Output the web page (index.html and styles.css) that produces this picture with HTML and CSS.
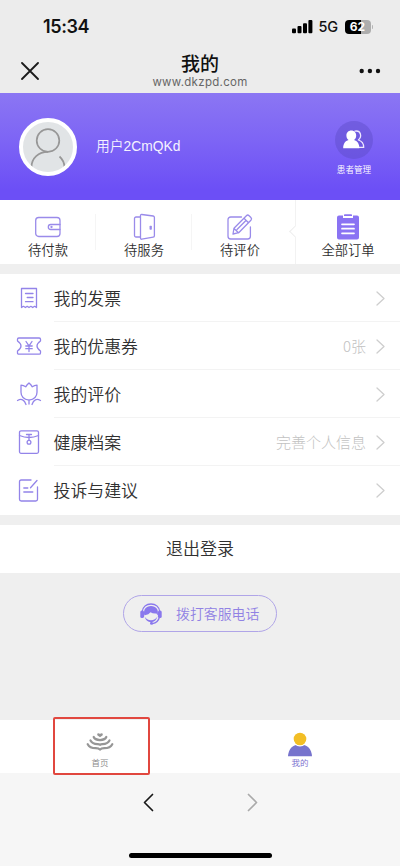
FILE: index.html
```html
<!DOCTYPE html>
<html lang="zh-CN">
<head>
<meta charset="utf-8">
<meta name="viewport" content="width=device-width, initial-scale=1">
<title>我的</title>
<link rel="stylesheet" href="styles.css">
</head>
<body>
<header class="top">
  <div class="status">
    <span class="time">15:34</span>
    <span class="status-right">
      <svg width="21" height="14" viewBox="0 0 21 14"><rect x="0" y="8.5" width="4" height="4.7" rx="1"/><rect x="5.5" y="6" width="4" height="7.2" rx="1"/><rect x="11" y="3.2" width="4" height="10" rx="1"/><rect x="16.4" y="0" width="4" height="13.2" rx="1"/></svg>
      <span class="net">5G</span>
      <span class="battery"><span class="level">62</span></span>
      <span class="battery-tip"></span>
    </span>
  </div>
  <div class="nav">
    <svg class="close" width="18" height="18" viewBox="0 0 18 18"><path d="M1 1L17 17M17 1L1 17"/></svg>
    <div class="heading"><h1>我的</h1><p>www.dkzpd.com</p></div>
    <svg class="more" width="22" height="6" viewBox="0 0 22 6"><circle cx="2.700" cy="3" r="2.200"/><circle cx="10.900" cy="3" r="2.200"/><circle cx="19" cy="3" r="2.200"/></svg>
  </div>
</header>

<section class="profile">
  <div class="avatar"><svg width="50" height="50" viewBox="0 0 50 50"><circle cx="25" cy="18.500" r="11.300"/><path d="M8.500 45c0-9 7-15.200 16.500-15.200M36.500 34.500c3.300 3 4.800 6.400 5 10.500"/></svg></div>
  <span class="user">用户2CmQKd</span>
  <a class="patients">
    <span class="disc"><svg width="24" height="22" viewBox="0 0 24 22"><path class="back" d="M13 2.200c5.500-1.200 7.500 5.300 3.400 8.800 4 1.200 5.300 3.600 5.300 7.400H17"/><path class="front" d="M9.300 1.500c3 0 4.900 2.200 4.900 5 0 1.900-.9 3.700-2.200 4.600 3.500 1 5.400 3.800 5.400 8.100H1.200c0-4.300 2-7.100 5.400-8.100C5.300 10.200 4.400 8.400 4.400 6.500c0-2.800 1.900-5 4.900-5z"/></svg></span>
    <span>患者管理</span>
  </a>
</section>

<nav class="orders">
  <a><svg width="28" height="28" viewBox="0 0 28 28"><rect x="1.700" y="4.500" width="24.300" height="19" rx="3"/><path d="M26 11.500H16.800a2.500 2.500 0 0 0 0 5H26"/><circle cx="17.500" cy="14" r=".5"/></svg><span>待付款</span></a>
  <a><svg width="28" height="28" viewBox="0 0 28 28"><path d="M10.300 24H6a1.500 1.500 0 0 1-1.500-1.500v-17A1.500 1.500 0 0 1 6 4h4.300M10.500 2.500v22.600q0 1.300 1.300 1.100l11.400-2q1.200-.2 1.200-1.400V4.400q0-1.200-1.200-1.400L11.800 1.500q-1.300-.2-1.300 1z"/><rect x="20.200" y="13.500" width="1" height="2.600"/></svg><span>待服务</span></a>
  <a><svg width="28" height="28" viewBox="0 0 28 28"><path d="M15.500 4H4.700A2.700 2.700 0 0 0 2 6.700v16.600A2.700 2.700 0 0 0 4.700 26h17a2.700 2.700 0 0 0 2.700-2.700V14M7 21l1-5.800L20.400 2.700q1.300-1.300 2.700 0l1.800 1.800q1.300 1.300 0 2.700L12.700 19.700zM18 5.200l4.500 4.500M8 15.500l4.500 4.200M11 16.500l8.700-8.700"/></svg><span>待评价</span></a>
  <a class="all"><svg class="solid" width="28" height="28" viewBox="0 0 28 28"><path d="M5 2.500h4V5h10V2.500h4q2 0 2 2v20q0 2-2 2H5q-2 0-2-2v-20q0-2 2-2z"/><path d="M10 3V2q0-.8.800-.8h6.400q.8 0 .8.800v1z"/><path class="lines" d="M8 11.300h12M8 15.700h12M8 20.300h12"/></svg><span>全部订单</span><i class="notch"></i></a>
</nav>

<main class="menu">
  <a class="row"><svg class="ico" width="26" height="26" viewBox="0 0 26 26"><path d="M5.500 22.500V3.500h15v19M5.500 22.500l2-1.200 1.900 1.200 1.800-1.200 1.800 1.200 1.900-1.200 1.800 1.200 1.900-1.200 1.900 1.200M9.500 8.500h7.500M11.200 12.500H17M9.500 16.700h7.500"/></svg><span class="body">我的发票<span class="note"></span><svg class="arrow" width="9" height="15" viewBox="0 0 9 15"><path d="M1 1l7 6.500L1 14"/></svg></span></a>
  <a class="row"><svg class="ico" width="26" height="26" viewBox="0 0 26 26"><path d="M2.800 5h20.400q1.300 0 1.300 1.300v1.700q-7 5 0 10v1.900q0 1.300-1.300 1.300H2.800q-1.300 0-1.300-1.300V18q7-5 0-10V6.300Q1.500 5 2.800 5zM10 8.500l3 4.300 3-4.300M9.800 13h6.400M9.800 15.700h6.400M13 13v5.500"/></svg><span class="body">我的优惠券<span class="note">0张</span><svg class="arrow" width="9" height="15" viewBox="0 0 9 15"><path d="M1 1l7 6.500L1 14"/></svg></span></a>
  <a class="row"><svg class="ico" width="26" height="26" viewBox="0 0 26 26"><path d="M13 2q2 1.700 3.300 3.800Q18.500 4.500 21 4.200v7q0 6.500-8 8-8-1.500-8-8v-7q2.500.3 4.700 1.600Q11 3.700 13 2zM13 19v4M1.500 19.500q6-3.300 8.500 4M24.500 19.500q-6-3.300-8.500 4"/></svg><span class="body">我的评价<span class="note"></span><svg class="arrow" width="9" height="15" viewBox="0 0 9 15"><path d="M1 1l7 6.500L1 14"/></svg></span></a>
  <a class="row"><svg class="ico" width="26" height="26" viewBox="0 0 26 26"><rect x="3.500" y="1.800" width="19" height="22.500" rx="1.500"/><path d="M3.500 6.500q9.500 4 19 0M10.500 5.500h5M13 5.500v5.800"/><circle cx="13" cy="13.200" r="1.900"/></svg><span class="body">健康档案<span class="note">完善个人信息</span><svg class="arrow" width="9" height="15" viewBox="0 0 9 15"><path d="M1 1l7 6.500L1 14"/></svg></span></a>
  <a class="row"><svg class="ico" width="26" height="26" viewBox="0 0 26 26"><path d="M15 3H5.200Q3.500 3 3.500 4.700v17.600q0 1.700 1.700 1.700h14.600q1.700 0 1.700-1.700V10M21 3.500l-6.500 7.200M7.800 11h4M7.800 15h9"/></svg><span class="body">投诉与建议<span class="note"></span><svg class="arrow" width="9" height="15" viewBox="0 0 9 15"><path d="M1 1l7 6.500L1 14"/></svg></span></a>
</main>

<a class="logout">退出登录</a>

<div class="service">
  <a class="call"><svg width="22" height="22" viewBox="0 0 22 22"><path class="fill" d="M4.300 12.500C3 6.500 6 3 11 3s8 3.500 6.700 9.500q-.5-.4-1.200-2-3.800.3-6-1.200-2 2.400-4.800 2.700z"/><rect class="fill" x=".3" y="7.500" width="3.700" height="7.500" rx="1.600"/><rect class="fill" x="18" y="7.500" width="3.700" height="7.500" rx="1.600"/><path class="stroke" d="M2.300 8.500C2.800 4 6.300 1 11 1s8.200 3 8.700 7.500M19.500 14q-1.500 5.800-7 6.700"/><path class="fill" d="M4.300 13q2 6.200 6.700 6.200 4.700 0 6.700-6.200-2.500 4.300-6.700 4.300T4.300 13z"/><circle class="fill" cx="11.500" cy="20.300" r="1.500"/></svg><span>拨打客服电话</span></a>
</div>

<nav class="tabbar">
  <a class="home"><svg width="28" height="22" viewBox="0 0 28 22"><path class="heart" d="M14 6.200l-2.700-2q-.7-1.900 1-2 1.200 0 1.700.9.500-.9 1.700-.9 1.700.1 1 2z"/><path d="M7.700 6q1 2.700 6.300 3.100 5.300-.4 6.300-3.100M4.500 9.500q1.800 3.500 7 3.600 1.800 0 2.500.8.700-.8 2.500-.8 5.200-.1 7-3.600M1.700 13.200q2 3.900 8 4 3.200 0 4.300 1.400 1.100-1.400 4.300-1.400 6-.1 8-4"/></svg><span>首页</span></a>
  <a class="mine"><svg width="26" height="26" viewBox="0 0 26 26"><path fill="#7673cd" d="M1 25.300q.8-11.500 12-11.800 11.200.3 12 11.800z"/><circle cx="13" cy="8" r="7.400" fill="#fff"/><circle cx="13" cy="8" r="6.300" fill="#f2be25"/></svg><span>我的</span></a>
  <i class="highlight"></i>
</nav>

<footer class="browser">
  <div class="history">
    <svg width="11" height="19" viewBox="0 0 11 19"><path d="M9.500 1.500L1.500 9.500l8 8"/></svg>
    <svg class="off" width="11" height="19" viewBox="0 0 11 19"><path d="M1.500 1.500l8 8-8 8"/></svg>
  </div>
  <div class="indicator"></div>
</footer>
</body>
</html>
```
FILE: styles.css
```css
* { box-sizing: border-box; }
body {
  margin: 0;
  width: 400px;
  height: 866px;
  display: flex;
  flex-direction: column;
  overflow: hidden;
  background: #efefef;
  color: #303030;
  font-family: "Liberation Sans", "Noto Sans CJK SC", sans-serif;
  font-weight: 350;
}
svg { display: block; flex: none; fill: none; stroke-linecap: round; stroke-linejoin: round; }
h1, p { margin: 0; }

.top { height: 93px; background: #ececec; color: #111; }
.status {
  height: 50px;
  padding: 3px 27px 0 43px;
  display: flex;
  align-items: center;
  justify-content: space-between;
  font-family: Inter, sans-serif;
}
.time { font-size: 18px; font-weight: 600; letter-spacing: -.4px; }
.status-right { display: flex; align-items: center; }
.status-right svg { fill: #000; }
.net { margin-left: 6px; width: 26px; font-size: 14.500px; font-weight: 500; letter-spacing: -.2px; }
.battery {
  width: 26px;
  height: 14px;
  border-radius: 4px;
  background: linear-gradient(90deg, #000 62%, #adadad 62%);
  color: #fff;
  text-align: center;
  line-height: 14px;
}
.level { display: block; font-size: 12px; font-weight: 700; }
.battery-tip { width: 1.500px; height: 4px; margin-left: 1px; border-radius: 0 2px 2px 0; background: #b5b5b5; }
.nav { display: flex; justify-content: space-between; height: 43px; padding: 0 19px 0 21px; }
.close { margin-top: 12px; stroke: #1a1a1a; stroke-width: 1.800; }
.more { margin-top: 18px; fill: #111; }
.heading { text-align: center; padding-left: 2px; }
h1 { font-family: "Noto Sans CJK SC", sans-serif; font-size: 19px; font-weight: 500; line-height: 26px; }
.heading p { font-family: Inter, sans-serif; font-weight: 400; font-size: 11.500px; letter-spacing: .3px; line-height: 13px; color: #666; }

.profile {
  height: 107px;
  padding: 0 27px 0 19px;
  display: flex;
  align-items: center;
  background: linear-gradient(#8b76f3, #7d64f5 45%, #6c4ff6 90%);
  color: #fff;
}
.avatar {
  width: 58px;
  height: 58px;
  border: 4px solid #fff;
  border-radius: 50%;
  background: #e1e4e6;
  overflow: hidden;
}
.avatar svg { stroke: #979797; stroke-width: 1.700; stroke-linecap: butt; }
.user { margin: -3px 0 0 19px; flex: 1; font-size: 13.800px; color: #f5f2ff; }
.patients { display: flex; flex-direction: column; align-items: center; font-size: 8.600px; line-height: 12px; padding-top: 3px; }
.disc { width: 38px; height: 38px; margin-bottom: 5px; border-radius: 50%; background: rgba(91, 75, 196, .42); display: flex; align-items: center; justify-content: center; }
.front { fill: #fff; }
.back { stroke: #eee8ff; stroke-width: 1.300; }

.orders { height: 64px; display: flex; background: #fff; }
.orders a {
  position: relative;
  width: 96px;
  display: flex;
  flex-direction: column;
  align-items: center;
  padding-top: 13px;
  font-size: 13.300px;
  line-height: 18px;
  background: linear-gradient(#f5f5f5, #f5f5f5) 95px 14px / 1px 36px no-repeat;
}
.orders a:nth-child(3) { background: none; }
.orders svg { stroke: #9a8bea; stroke-width: 1.300; }
.orders span { margin-top: 1px; }
.orders .all { flex: 1; width: auto; margin-left: 7px; border-left: 1px solid #f2f2f2; background: none; }
.orders .solid { fill: #8a73f3; stroke: none; }
.orders .lines { stroke: #fff; stroke-width: 1.700; }
.notch { position: absolute; left: -5px; top: 27px; width: 9px; height: 9px; border-left: 1px solid #ededed; border-bottom: 1px solid #ededed; background: #fff; transform: rotate(45deg); }

.menu { margin-top: 10px; background: #fff; height: 241px; }
.row { display: flex; align-items: center; height: 48px; padding-left: 16px; }
.ico { stroke: #9384e9; stroke-width: 1.300; }
.body { flex: 1; height: 48px; margin-left: 11.500px; padding-right: 15px; display: flex; align-items: center; font-size: 16.900px; border-bottom: 1px solid #f3f3f3; }
.row:last-child .body { border-color: transparent; }
.note { margin-left: auto; margin-right: 10px; font-size: 15px; color: #c2c2c2; font-family: "Noto Sans CJK SC", sans-serif; font-weight: 300; }
.arrow { stroke: #cecece; stroke-width: 1.300; margin-top: 1px; }

.logout { height: 48px; margin-top: 10px; background: #fff; text-align: center; font-size: 17px; line-height: 49px; }
.service { height: 147px; padding-top: 22px; display: flex; justify-content: center; align-items: flex-start; }
.call { width: 154px; height: 37px; border: 1px solid #b0a5e8; border-radius: 19px; display: flex; align-items: center; padding-left: 16px; gap: 14px; font-size: 13.900px; color: #9182e4; white-space: nowrap; }
.call span { margin-top: -2px; }
.call .fill { fill: #8a78ed; }
.call .stroke { stroke: #8a78ed; stroke-width: 1.300; }

.tabbar { position: relative; height: 53px; display: flex; background: #fff; font-size: 8.500px; line-height: 12px; }
.tabbar a { flex: 1; display: flex; flex-direction: column; align-items: center; padding-top: 11px; }
.home { color: #888; }
.home svg { stroke: #969696; stroke-width: 2.200; margin-bottom: 4px; }
.home .heart { fill: #969696; stroke: none; }
.mine { color: #7568cd; }
.highlight { position: absolute; left: 53px; top: -3px; width: 97px; height: 58px; border: 2px solid #e1473f; border-radius: 2px; z-index: 1; }

.browser { flex: 1; background: #f6f6f6; display: flex; flex-direction: column; align-items: center; justify-content: space-between; padding: 20px 0 8px; }
.history { display: flex; gap: 93px; }
.history svg { stroke: #181818; stroke-width: 1.700; }
.history .off { stroke: #aaa; }
.indicator { width: 143px; height: 5px; border-radius: 3px; background: #000; }
```
